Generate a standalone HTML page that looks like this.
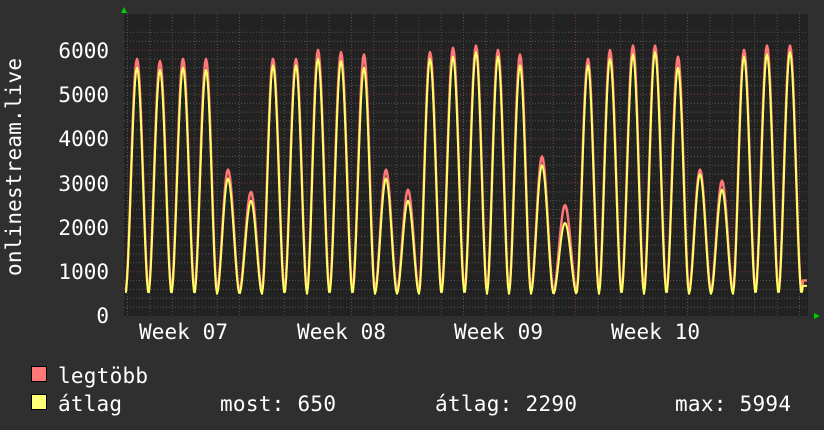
<!DOCTYPE html>
<html><head><meta charset="utf-8"><style>
html,body{margin:0;padding:0;background:#2f2f2f;}
svg{display:block}
text{font-family:"DejaVu Sans Mono","Liberation Mono",monospace;fill:#fff}
</style></head><body>
<svg id="s" width="824" height="430" xmlns="http://www.w3.org/2000/svg">
<rect width="824" height="430" fill="#2f2f2f"/>
<rect x="124" y="14" width="684" height="302" fill="#222222"/>
<g id="grid"></g>
<path id="red" fill="none" stroke="#ff7777" stroke-width="2.5" stroke-linejoin="round"/>
<path id="yel" fill="none" stroke="#ffff66" stroke-width="2" stroke-linejoin="round"/>
<polygon points="121,13 127,13 124,7" fill="#00cc00"/>
<polygon points="814,313 814,319 820,316" fill="#00cc00"/>
<g font-size="21" text-anchor="end">
<text x="109" y="323">0</text><text x="109" y="279">1000</text><text x="109" y="235">2000</text>
<text x="109" y="191">3000</text><text x="109" y="146">4000</text><text x="109" y="102">5000</text><text x="109" y="58">6000</text>
</g>
<g font-size="21">
<text x="139" y="339" textLength="89">Week 07</text><text x="297" y="339" textLength="89">Week 08</text><text x="454" y="339" textLength="89">Week 09</text><text x="611" y="339" textLength="89">Week 10</text>
</g>
<text font-size="21" transform="translate(21,167) rotate(-90)" text-anchor="middle" textLength="218">onlinestream.live</text>
<rect x="31.5" y="366.5" width="15" height="15" fill="#ff7777" stroke="#000"/>
<rect x="31.5" y="394.5" width="15" height="15" fill="#ffff77" stroke="#000"/>
<g font-size="21"><text x="58" y="383" textLength="90">legtöbb</text><text x="58" y="411" textLength="64">átlag</text>
<text x="220" y="411" textLength="116">most: 650</text><text x="435" y="411" textLength="142">átlag: 2290</text><text x="675" y="411" textLength="116">max: 5994</text></g>
</svg>
<script>
var g=document.getElementById('grid'),h='';
var Y=function(v){return 316-v*0.04433;};
for(var v=200;v<=6400;v+=200){var y=Y(v);if(y<14)break;var maj=v%1000==0;
h+='<line x1="124" x2="808" y1="'+y.toFixed(1)+'" y2="'+y.toFixed(1)+'" stroke="'+(maj?'#7a3a3a':'#555')+'" stroke-width="1" stroke-dasharray="1,2"/>';}
for(var x=127.5;x<808;x+=22.4){var maj=[262,419,577,734].some(function(m){return Math.abs(m-x)<6});
h+='<line y1="14" y2="316" x1="'+x.toFixed(1)+'" x2="'+x.toFixed(1)+'" stroke="'+(maj?'#7a3a3a':'#555')+'" stroke-width="1" stroke-dasharray="1,2"/>';}
g.innerHTML=h;
var P=[[114,5800,5600],[137,5800,5600],[160,5750,5550],[183,5800,5600],[206,5800,5550],[228,3300,3100],[251,2800,2600],[273,5800,5650],[296,5800,5650],[318,6000,5800],[341,5950,5750],[364,5900,5600],[386,3300,3100],[408,2850,2600],[430,5950,5800],[453,6050,5850],[476,6100,5950],[498,6000,5850],[520,5900,5650],[542,3600,3400],[565,2500,2100],[588,5800,5650],[610,6000,5800],[633,6100,5900],[655,6100,5950],[678,5850,5600],[700,3300,3200],[722,3050,2850],[744,6000,5850],[767,6100,5900],[790,6100,5950],[813,6000,5800]];
function val(x,i,base){
for(var k=0;k<P.length-1;k++){var a=P[k][0],b=P[k+1][0];if(x>=a&&x<=b){var m=(a+b)/2;var pk,half;
if(x<m){pk=P[k];half=m-a;}else{pk=P[k+1];half=b-m;}
var t=Math.abs(x-pk[0])/half;var f=0.5+0.5*Math.cos(Math.PI*t);f=Math.pow(f,0.9);
return base+(pk[i]-base)*f;}}return base;}
function path(i,base){var d='';for(var x=125;x<=807;x+=1){var v=val(x,i,base);if(x>800)v=Math.min(v,i==1?800:680);d+=(x==125?'M':'L')+x+','+Y(v).toFixed(1);}return d;}
document.getElementById('red').setAttribute('d',path(1,560));
document.getElementById('yel').setAttribute('d',path(2,500));
</script>
</body></html>
